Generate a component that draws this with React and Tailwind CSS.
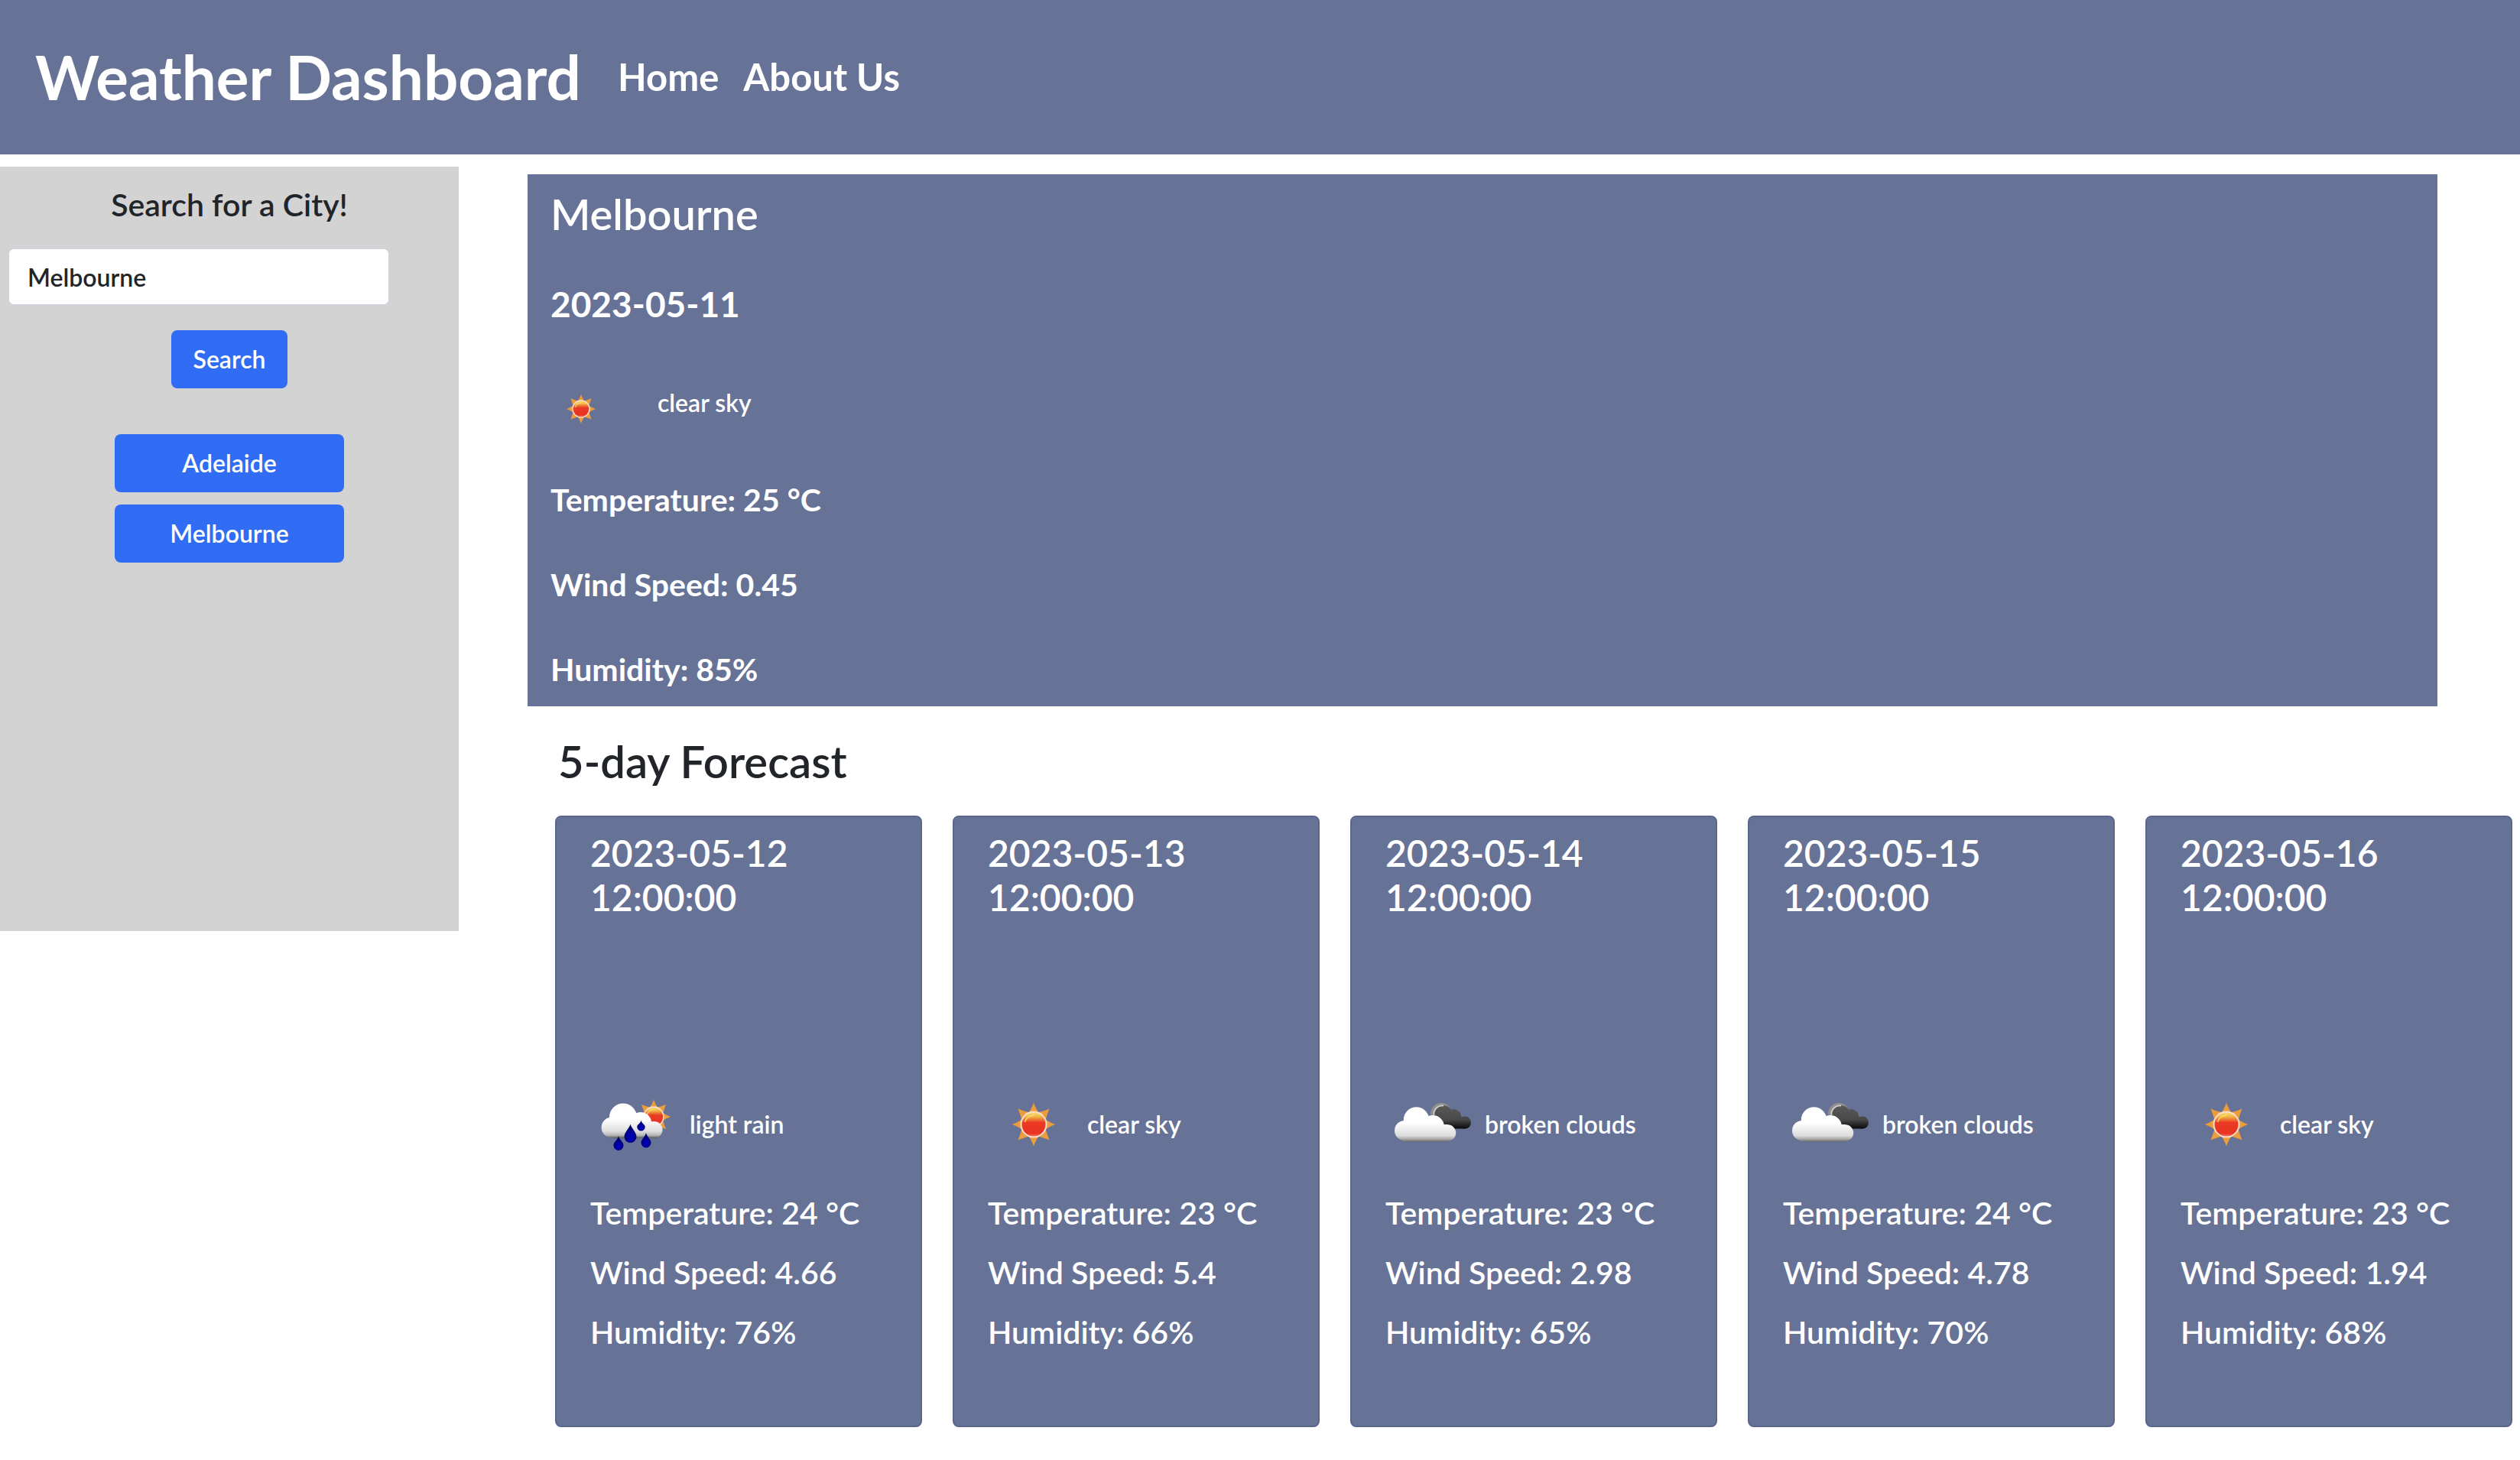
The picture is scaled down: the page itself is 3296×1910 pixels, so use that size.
import React from "react";

const forecast = [
  { date: "2023-05-12", sky: "light rain", temp: 24, wind: "4.66", humidity: 76 },
  { date: "2023-05-13", sky: "clear sky", temp: 23, wind: "5.4", humidity: 66 },
  { date: "2023-05-14", sky: "broken clouds", temp: 23, wind: "2.98", humidity: 65 },
  { date: "2023-05-15", sky: "broken clouds", temp: 24, wind: "4.78", humidity: 70 },
  { date: "2023-05-16", sky: "clear sky", temp: 23, wind: "1.94", humidity: 68 },
];

const RAY_ANGLES = [0, 45, 90, 135, 180, 225, 270, 315];

function Defs() {
  return (
    <defs>
      <linearGradient id="sunFill" x1="0" y1="0" x2="0" y2="1">
        <stop offset="0" stopColor="#f6d774" />
        <stop offset="0.15" stopColor="#f2c04a" />
        <stop offset="0.42" stopColor="#ea3a24" />
        <stop offset="0.88" stopColor="#ea3323" />
        <stop offset="1" stopColor="#f0705c" />
      </linearGradient>
      <linearGradient id="rainCloud" gradientUnits="userSpaceOnUse" x1="0" y1="32" x2="0" y2="78">
        <stop offset="0.45" stopColor="#ffffff" />
        <stop offset="0.8" stopColor="#dedede" />
        <stop offset="0.92" stopColor="#b4b4b4" />
        <stop offset="1" stopColor="#555555" />
      </linearGradient>
      <linearGradient id="whiteCloud" gradientUnits="userSpaceOnUse" x1="0" y1="37" x2="0" y2="83">
        <stop offset="0.45" stopColor="#ffffff" />
        <stop offset="0.82" stopColor="#dcdcdc" />
        <stop offset="0.92" stopColor="#a8a8a8" />
        <stop offset="1" stopColor="#606060" />
      </linearGradient>
      <linearGradient id="darkCloud" gradientUnits="userSpaceOnUse" x1="0" y1="32" x2="0" y2="66">
        <stop offset="0" stopColor="#5c5c5c" />
        <stop offset="0.65" stopColor="#484848" />
        <stop offset="1" stopColor="#050505" />
      </linearGradient>
      <radialGradient id="drop" cx="0.5" cy="0.7" r="0.55">
        <stop offset="0" stopColor="#0000cc" />
        <stop offset="1" stopColor="#000066" />
      </radialGradient>
    </defs>
  );
}

function SunShape({ x, y, scale = 1 }) {
  return (
    <g transform={`translate(${x} ${y}) scale(${scale})`}>
      {RAY_ANGLES.map((a) => (
        <path
          key={a}
          d={a % 90 === 0 ? "M-7 -15 Q-3 -20 0 -28.5 Q3 -20 7 -15 Z" : "M-7 -15 Q-4 -20 0 -29 Q4 -20 7 -15 Z"}
          fill="#ec9c3b"
          transform={`rotate(${a})`}
        />
      ))}
      <circle r="17.5" fill="#f7dfcf" />
      <circle r="15.5" fill="url(#sunFill)" />
      <path d="M-11.5 -3 A12 12 0 0 1 0 -12" fill="none" stroke="#f8dc6a" strokeWidth="2" opacity="0.8" />
    </g>
  );
}

function Sun() {
  return <SunShape x={60} y={60} />;
}

function RainDrop({ x, top, bottom, r }) {
  const c = bottom - r;
  return (
    <path
      d={`M${x} ${top} C${x + 1} ${top + 5} ${x + r} ${c - r * 0.7} ${x + r} ${c} A${r} ${r} 0 0 1 ${x - r} ${c} C${x - r} ${c - r * 0.7} ${x - 1} ${top + 5} ${x} ${top} Z`}
      fill="url(#drop)"
    />
  );
}

function LightRain() {
  return (
    <>
      <SunShape x={83} y={50} scale={0.78} />
      <g fill="url(#rainCloud)">
        <circle cx="43" cy="50.5" r="18" />
        <circle cx="28" cy="64" r="13.4" />
        <circle cx="66" cy="58" r="14" />
        <circle cx="83.5" cy="67" r="11" />
        <rect x="27" y="56" width="58" height="22" rx="6" />
      </g>
      <RainDrop x={66.5} top={54.5} bottom={68.5} r={5.2} />
      <RainDrop x={52.5} top={59.5} bottom={84} r={8} />
      <RainDrop x={37} top={75} bottom={94} r={6.5} />
      <RainDrop x={73} top={71} bottom={90.5} r={6.5} />
    </>
  );
}

function BrokenClouds() {
  return (
    <>
      <circle cx="73" cy="45.5" r="13.8" fill="#8f8f8f" />
      <g fill="url(#darkCloud)">
        <circle cx="75.5" cy="47.5" r="12.6" />
        <circle cx="89.5" cy="49.5" r="9.5" />
        <circle cx="104" cy="57.5" r="8" />
        <rect x="72" y="50" width="38" height="15.5" rx="7" />
      </g>
      <path d="M63.5 48 A11 11 0 0 1 76 35.5" fill="none" stroke="#cfcfcf" strokeWidth="1.8" />
      <g fill="url(#whiteCloud)">
        <circle cx="40.5" cy="54" r="16.7" />
        <circle cx="25" cy="68" r="13" />
        <circle cx="62" cy="63" r="15" />
        <circle cx="81.5" cy="71" r="10.7" />
        <rect x="19" y="60" width="68" height="22.5" rx="8" />
      </g>
    </>
  );
}

const ICONS = {
  "clear sky": Sun,
  "light rain": LightRain,
  "broken clouds": BrokenClouds,
};

function WeatherIcon({ sky, className }) {
  const Icon = ICONS[sky];
  return (
    <svg viewBox="0 0 120 120" className={className} role="img" aria-label={sky}>
      <Defs />
      <Icon />
    </svg>
  );
}

function ForecastCard({ day }) {
  return (
    <article className="min-h-[800px] rounded-lg border-2 border-[#5b658b] bg-[#677297] px-11 pt-[18px] pb-11 text-white">
      <h3 className="text-[48px] leading-[58px] font-semibold">{day.date} 12:00:00</h3>
      <div className="mt-[208px] flex items-center gap-[10px]">
        <WeatherIcon sky={day.sky} className="size-[120px] shrink-0" />
        <span className="text-[32px] leading-[48px] font-semibold">{day.sky}</span>
      </div>
      <div className="mt-8 flex flex-col gap-[30px] text-[41px] leading-[48px] font-semibold">
        <p>Temperature: {day.temp} °C</p>
        <p>Wind Speed: {day.wind}</p>
        <p>Humidity: {day.humidity}%</p>
      </div>
    </article>
  );
}

export default function App() {
  return (
    <div className="bg-white font-['Lato',sans-serif] text-[#212529]">
      <header className="flex min-h-[202px] items-center bg-[#677297] px-[46px] pb-[2px] text-white">
        <h1 className="text-[80px] leading-[96px] font-bold">Weather Dashboard</h1>
        <nav className="ml-12 flex gap-8 text-[49px] leading-[72px] font-bold">
          <a href="#home">Home</a>
          <a href="#about">About Us</a>
        </nav>
      </header>

      <div className="mt-4 flex items-start">
        <aside className="flex min-h-[1000px] w-[600px] shrink-0 flex-col bg-[#d3d3d3] px-[10px] pt-[26px]">
          <label htmlFor="city" className="text-center text-[41px] leading-[48px] font-semibold">
            Search for a City!
          </label>
          <input
            id="city"
            type="text"
            defaultValue="Melbourne"
            className="mt-8 h-[76px] w-[500px] rounded-lg border-2 border-[#ced4da] bg-white px-6 text-[32px] leading-[48px] font-semibold"
          />
          <button
            type="button"
            className="mt-8 h-[76px] w-[152px] self-center rounded-lg bg-[#316cf4] text-[32px] leading-[48px] font-semibold text-white"
          >
            Search
          </button>
          <div className="mt-[60px] flex w-[300px] flex-col gap-4 self-center text-[32px] leading-[48px] font-semibold text-white">
            <button type="button" className="h-[76px] rounded-lg bg-[#316cf4]">Adelaide</button>
            <button type="button" className="h-[76px] rounded-lg bg-[#316cf4]">Melbourne</button>
          </div>
        </aside>

        <main className="min-w-0 flex-1 pt-[10px] pl-[90px]">
          <section className="mr-[108px] bg-[#677297] px-[30px] pt-[18px] pb-6 text-white">
            <h2 className="text-[56px] leading-[67px] font-semibold">Melbourne</h2>
            <p className="mt-14 text-[46px] leading-[58px] font-bold">2023-05-11</p>
            <div className="mt-[68px] flex items-start gap-[60px]">
              <WeatherIcon sky="clear sky" className="size-20" />
              <span className="pt-2 text-[32px] leading-[48px] font-semibold">clear sky</span>
            </div>
            <div className="mt-[55px] flex flex-col gap-[63px] text-[41px] leading-[48px] font-bold">
              <p>Temperature: 25 °C</p>
              <p>Wind Speed: 0.45</p>
              <p>Humidity: 85%</p>
            </div>
          </section>

          <section className="pt-[38px] pr-[10px] pb-10 pl-9">
            <h2 className="pl-1 text-[58px] leading-[67px] font-semibold">5-day Forecast</h2>
            <div className="mt-[38px] grid grid-cols-5 gap-10">
              {forecast.map((day) => (
                <ForecastCard key={day.date} day={day} />
              ))}
            </div>
          </section>
        </main>
      </div>
    </div>
  );
}
